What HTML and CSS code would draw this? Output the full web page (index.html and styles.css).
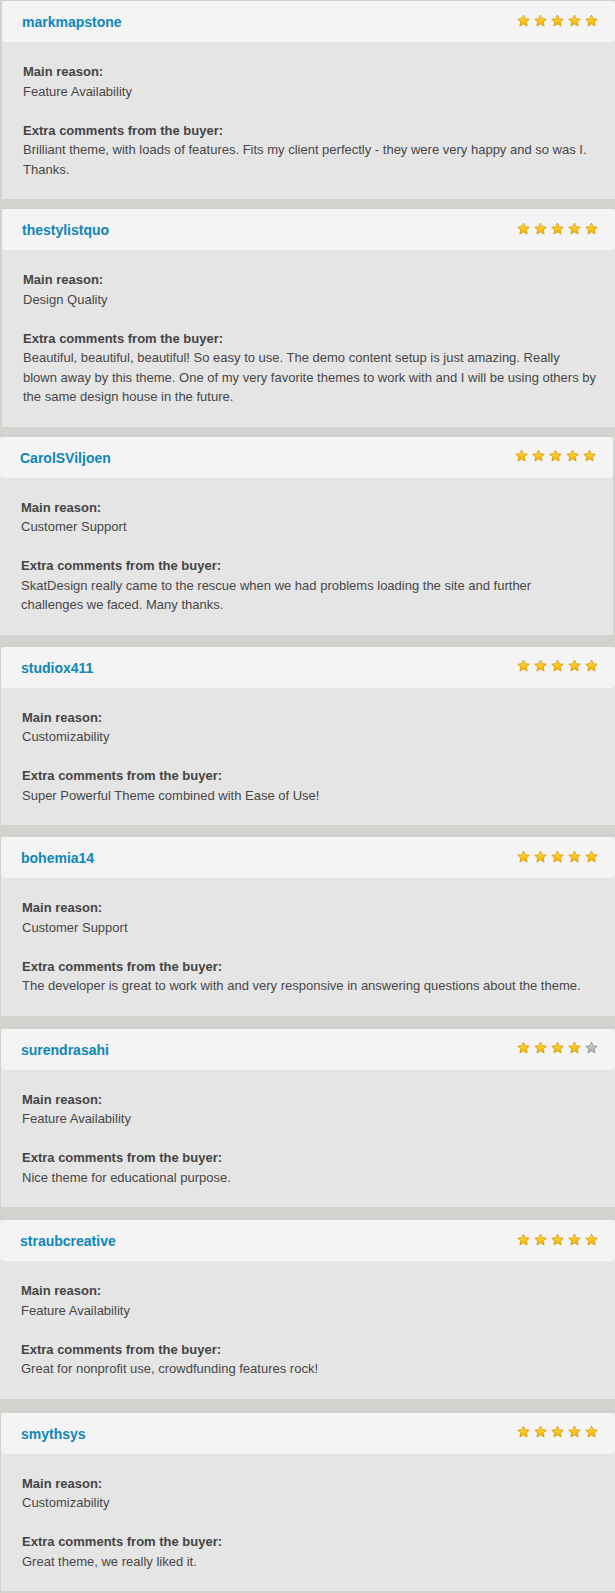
FILE: index.html
```html
<!DOCTYPE html>
<html lang="en">
<head>
<meta charset="utf-8">
<title>Reviews</title>
<link rel="stylesheet" href="styles.css">
</head>
<body>
<svg class="defs" width="0" height="0" aria-hidden="true">
  <defs>
    <linearGradient id="gold" x1="0" y1="0" x2="0" y2="1">
      <stop offset="0" stop-color="#ffe36a"/>
      <stop offset="0.55" stop-color="#fcc51a"/>
      <stop offset="1" stop-color="#f6ad00"/>
    </linearGradient>
    <linearGradient id="grey" x1="0" y1="0" x2="0" y2="1">
      <stop offset="0" stop-color="#d6d6d6"/>
      <stop offset="1" stop-color="#a9a9a9"/>
    </linearGradient>
    <symbol id="star" viewBox="0 0 14 14">
      <polygon points="7,1.2 8.8,5.2 13.2,5.6 9.85,8.5 10.9,12.9 7,10.6 3.1,12.9 4.15,8.5 0.8,5.6 5.2,5.2"/>
    </symbol>
  </defs>
</svg>

<div class="list">

  <section class="review off-2">
    <header class="head"><span class="user">markmapstone</span>
      <span class="stars"><svg class="star"><use href="#star"/></svg><svg class="star"><use href="#star"/></svg><svg class="star"><use href="#star"/></svg><svg class="star"><use href="#star"/></svg><svg class="star"><use href="#star"/></svg></span>
    </header>
    <div class="body">
      <p><b>Main reason:</b><br>Feature Availability</p>
      <p><b>Extra comments from the buyer:</b><br>Brilliant theme, with loads of features. Fits my client perfectly - they were very happy and so was I. Thanks.</p>
    </div>
  </section>

  <section class="review off-2">
    <header class="head"><span class="user">thestylistquo</span>
      <span class="stars"><svg class="star"><use href="#star"/></svg><svg class="star"><use href="#star"/></svg><svg class="star"><use href="#star"/></svg><svg class="star"><use href="#star"/></svg><svg class="star"><use href="#star"/></svg></span>
    </header>
    <div class="body">
      <p><b>Main reason:</b><br>Design Quality</p>
      <p><b>Extra comments from the buyer:</b><br>Beautiful, beautiful, beautiful! So easy to use. The demo content setup is just amazing. Really blown away by this theme. One of my very favorite themes to work with and I will be using others by the same design house in the future.</p>
    </div>
  </section>

  <section class="review off-0 narrow">
    <header class="head"><span class="user">CarolSViljoen</span>
      <span class="stars"><svg class="star"><use href="#star"/></svg><svg class="star"><use href="#star"/></svg><svg class="star"><use href="#star"/></svg><svg class="star"><use href="#star"/></svg><svg class="star"><use href="#star"/></svg></span>
    </header>
    <div class="body">
      <p><b>Main reason:</b><br>Customer Support</p>
      <p><b>Extra comments from the buyer:</b><br>SkatDesign really came to the rescue when we had problems loading the site and further challenges we faced. Many thanks.</p>
    </div>
  </section>

  <section class="review off-1">
    <header class="head"><span class="user">studiox411</span>
      <span class="stars"><svg class="star"><use href="#star"/></svg><svg class="star"><use href="#star"/></svg><svg class="star"><use href="#star"/></svg><svg class="star"><use href="#star"/></svg><svg class="star"><use href="#star"/></svg></span>
    </header>
    <div class="body">
      <p><b>Main reason:</b><br>Customizability</p>
      <p><b>Extra comments from the buyer:</b><br>Super Powerful Theme combined with Ease of Use!</p>
    </div>
  </section>

  <section class="review off-1">
    <header class="head"><span class="user">bohemia14</span>
      <span class="stars"><svg class="star"><use href="#star"/></svg><svg class="star"><use href="#star"/></svg><svg class="star"><use href="#star"/></svg><svg class="star"><use href="#star"/></svg><svg class="star"><use href="#star"/></svg></span>
    </header>
    <div class="body">
      <p><b>Main reason:</b><br>Customer Support</p>
      <p><b>Extra comments from the buyer:</b><br>The developer is great to work with and very responsive in answering questions about the theme.</p>
    </div>
  </section>

  <section class="review off-1">
    <header class="head"><span class="user">surendrasahi</span>
      <span class="stars"><svg class="star"><use href="#star"/></svg><svg class="star"><use href="#star"/></svg><svg class="star"><use href="#star"/></svg><svg class="star"><use href="#star"/></svg><svg class="star empty"><use href="#star"/></svg></span>
    </header>
    <div class="body">
      <p><b>Main reason:</b><br>Feature Availability</p>
      <p><b>Extra comments from the buyer:</b><br>Nice theme for educational purpose.</p>
    </div>
  </section>

  <section class="review off-0">
    <header class="head"><span class="user">straubcreative</span>
      <span class="stars"><svg class="star"><use href="#star"/></svg><svg class="star"><use href="#star"/></svg><svg class="star"><use href="#star"/></svg><svg class="star"><use href="#star"/></svg><svg class="star"><use href="#star"/></svg></span>
    </header>
    <div class="body">
      <p><b>Main reason:</b><br>Feature Availability</p>
      <p><b>Extra comments from the buyer:</b><br>Great for nonprofit use, crowdfunding features rock!</p>
    </div>
  </section>

  <section class="review off-1">
    <header class="head"><span class="user">smythsys</span>
      <span class="stars"><svg class="star"><use href="#star"/></svg><svg class="star"><use href="#star"/></svg><svg class="star"><use href="#star"/></svg><svg class="star"><use href="#star"/></svg><svg class="star"><use href="#star"/></svg></span>
    </header>
    <div class="body">
      <p><b>Main reason:</b><br>Customizability</p>
      <p><b>Extra comments from the buyer:</b><br>Great theme, we really liked it.</p>
    </div>
  </section>

</div>
</body>
</html>
```

FILE: styles.css
```css
html, body {
  margin: 0;
  padding: 0;
  background: #d3d2cf;
}

body {
  font-family: "Liberation Sans", Arial, sans-serif;
  font-size: 13px;
  color: #474747;
  padding-top: 1px;
}

.defs {
  position: absolute;
  width: 0;
  height: 0;
  overflow: hidden;
}

.list {
  display: flex;
  flex-direction: column;
}

.review {
  background: #e5e5e5;
}

.review:nth-child(2),
.review:nth-child(3) { margin-top: 10px; }
.review:nth-child(4),
.review:nth-child(5) { margin-top: 12px; }
.review:nth-child(6),
.review:nth-child(7) { margin-top: 13px; }
.review:nth-child(8) { margin-top: 14px; }

.off-0 { margin-left: 0; }
.off-1 { margin-left: 1px; }
.off-2 { margin-left: 2px; }
.narrow { margin-right: 2px; }

.head {
  height: 41px;
  box-sizing: border-box;
  background: #f4f4f4;
  border-radius: 4px;
  display: flex;
  align-items: center;
  justify-content: space-between;
  padding: 0 17px 0 20px;
}

.user {
  font-weight: bold;
  font-size: 14px;
  color: #0e86b9;
  padding-top: 1px;
}

.stars {
  display: flex;
  gap: 4px;
  margin-bottom: 3px;
}

.star {
  width: 13px;
  height: 13px;
  fill: url(#gold);
  stroke: #d99700;
  stroke-width: 0.9;
  stroke-linejoin: round;
  overflow: visible;
}

.star.empty {
  fill: url(#grey);
  stroke: #939393;
}

.body {
  padding: 20px 18px 20px 21px;
  line-height: 19.5px;
}

.body p {
  margin: 0;
}

.body p + p {
  margin-top: 19.5px;
}

.body b {
  color: #444;
}
```
